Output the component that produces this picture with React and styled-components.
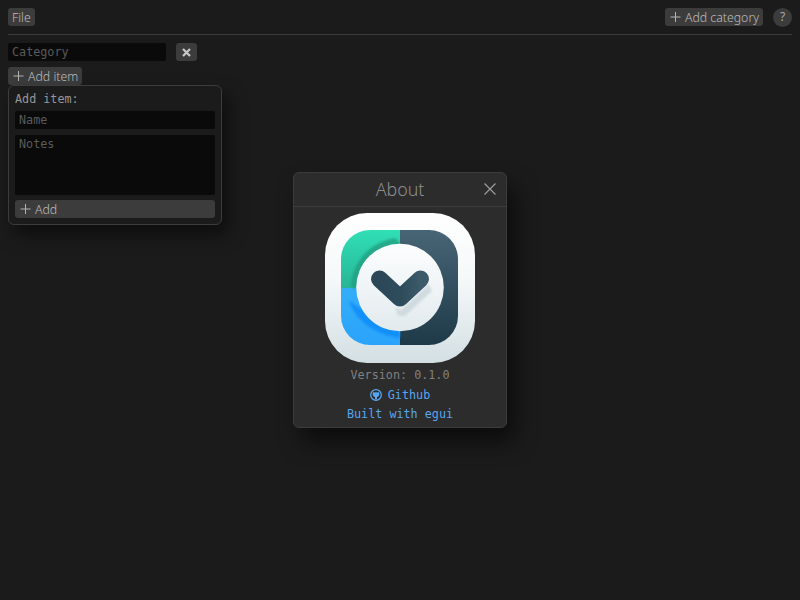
import styled, { createGlobalStyle } from 'styled-components';

const Global = createGlobalStyle`
    html, body { margin: 0; padding: 0; background: #1b1b1b; }
    #root { width: 800px; height: 600px; overflow: hidden; }
`;

const ui = '"Noto Sans", "DejaVu Sans", sans-serif';
const mono = '"DejaVu Sans Mono", "Liberation Mono", monospace';

const Page = styled.div`
    position: relative;
    width: 800px;
    height: 600px;
    box-sizing: border-box;
    padding: 8px 8px 0;
    background: #1b1b1b;
`;

const TopBar = styled.header`
    display: flex;
    align-items: flex-start;
    height: 18px;
    padding-bottom: 8px;
    border-bottom: 1px solid #3c3c3c;
`;

const Spacer = styled.div`
    flex: 1;
`;

const Button = styled.button`
    display: flex;
    align-items: center;
    gap: 4px;
    height: 18px;
    padding: 0 4px;
    border: 0;
    border-radius: 3px;
    background: #3c3c3c;
    color: #bcbcbc;
    font: 300 12.3px ${ui};
    white-space: nowrap;
`;

const WideButton = styled(Button)`
    width: 200px;
`;

const HelpButton = styled.div`
    width: 19px;
    height: 19px;
    margin-left: 10px;
    border-radius: 50%;
    background: #3c3c3c;
    color: #a8a8a8;
    font: 400 12px/18px ${ui};
    text-align: center;
`;

const CategoryRow = styled.div`
    display: flex;
    align-items: center;
    gap: 10px;
    margin-top: 8px;
`;

const Field = styled.div`
    box-sizing: border-box;
    width: ${p => p.$width}px;
    height: ${p => p.$height}px;
    padding: 2px 4px 0;
    border-radius: 2px;
    background: #0a0a0a;
    color: #5a5a5a;
    font: 11.75px/14px ${mono};
`;

const CloseButton = styled.div`
    display: flex;
    align-items: center;
    justify-content: center;
    width: 21px;
    height: 18px;
    border-radius: 3px;
    background: #3c3c3c;
`;

const AddItemRow = styled.div`
    display: flex;
    margin-top: 6px;
`;

const Popup = styled.section`
    position: absolute;
    left: 8px;
    top: 85px;
    box-sizing: border-box;
    width: 214px;
    height: 140px;
    padding: 6px 6px 6px;
    display: flex;
    flex-direction: column;
    border: 1px solid #3c3c3c;
    border-radius: 6px;
    background: #1b1b1b;
    box-shadow: 6px 10px 18px rgba(0, 0, 0, 0.5);
`;

const PopupTitle = styled.div`
    height: 19px;
    color: #969696;
    font: 11.75px/14px ${mono};
`;

const PopupFields = styled.div`
    display: flex;
    flex-direction: column;
    gap: 6px;
`;

const PopupAction = styled(WideButton)`
    margin-top: 5px;
`;

const Dialog = styled.section`
    position: absolute;
    left: 293px;
    top: 172px;
    box-sizing: border-box;
    width: 214px;
    height: 256px;
    display: flex;
    flex-direction: column;
    align-items: center;
    border: 1px solid #3c3c3c;
    border-radius: 6px;
    background: #2c2c2c;
    box-shadow: 8px 14px 22px rgba(0, 0, 0, 0.55);
`;

const DialogHeader = styled.header`
    position: relative;
    align-self: stretch;
    box-sizing: border-box;
    height: 34px;
    border-bottom: 1px solid #3c3c3c;
    color: #8c8c8c;
    font: 300 17.8px/33px ${ui};
    text-align: center;
`;

const DialogClose = styled.svg`
    position: absolute;
    right: 10px;
    top: 10px;
`;

const Logo = styled.svg`
    margin-top: 6px;
    display: block;
`;

const Version = styled.div`
    margin-top: 5px;
    color: #808080;
    font: 11.75px/14px ${mono};
`;

const Link = styled.div`
    display: flex;
    align-items: center;
    gap: 6px;
    margin-top: ${p => p.$top}px;
    color: #5aa5f0;
    font: 11.75px/14px ${mono};
`;

const Plus = () => (
    <svg width="12" height="12" viewBox="0 0 12 12" fill="none" stroke="#b4b4b4" strokeWidth="1">
        <path d="M6.500 1v10M1.500 6h10" />
    </svg>
);

const AppLogo = () => (
    <Logo width="150" height="150" viewBox="0 0 150 150">
        <defs>
            <linearGradient id="frame" x1="0" y1="0" x2="0" y2="1">
                <stop offset="0" stopColor="#ffffff" />
                <stop offset="0.45" stopColor="#f5f8f9" />
                <stop offset="1" stopColor="#d3dfe3" />
            </linearGradient>
            <linearGradient id="green" x1="0" y1="0" x2="0" y2="1">
                <stop offset="0" stopColor="#30dfb6" />
                <stop offset="1" stopColor="#28b596" />
            </linearGradient>
            <linearGradient id="blue" x1="0" y1="0" x2="0" y2="1">
                <stop offset="0" stopColor="#34adf8" />
                <stop offset="1" stopColor="#2aa4fb" />
            </linearGradient>
            <linearGradient id="dark" x1="0" y1="0" x2="0" y2="1">
                <stop offset="0" stopColor="#486576" />
                <stop offset="1" stopColor="#1e3a48" />
            </linearGradient>
            <linearGradient id="disc" x1="0" y1="0" x2="0" y2="1">
                <stop offset="0" stopColor="#fdfefe" />
                <stop offset="1" stopColor="#e2eaee" />
            </linearGradient>
            <linearGradient id="chev" x1="0" y1="0" x2="1" y2="0">
                <stop offset="0" stopColor="#2c4858" />
                <stop offset="0.55" stopColor="#2e4c5c" />
                <stop offset="1" stopColor="#3b5a6a" />
            </linearGradient>
            <filter id="soft" x="-20%" y="-20%" width="140%" height="140%">
                <feGaussianBlur stdDeviation="1.2" />
            </filter>
            <clipPath id="inner">
                <rect x="16" y="17" width="117" height="115" rx="29" />
            </clipPath>
        </defs>
        <rect width="150" height="150" rx="42" fill="url(#frame)" />
        <g clipPath="url(#inner)">
            <rect x="16" y="17" width="59" height="58" fill="url(#green)" />
            <rect x="16" y="75" width="59" height="57" fill="url(#blue)" />
            <rect x="75" y="17" width="58" height="115" fill="url(#dark)" />
            <path d="M26 75c0-22 14-44 44-50l5 5v45z" fill="#209c80" opacity="0.75" filter="url(#soft)" />
            <path d="M24 88c8 22 28 34 51 37v-20H50z" fill="#0f8cfb" opacity="0.85" filter="url(#soft)" />
        </g>
        <circle cx="75" cy="74.500" r="43.800" fill="url(#disc)" />
        <path d="M70 94l6 3 28-26 3 7-27 25h-7z" fill="#cbd8dd" opacity="0.85" filter="url(#soft)" />
        <path d="M54.500 66L75 85 95.500 66" fill="none" stroke="url(#chev)" strokeWidth="17" strokeLinecap="round" strokeLinejoin="round" />
    </Logo>
);

const GithubMark = () => (
    <svg width="12" height="12" viewBox="0 0 12 12">
        <circle cx="6" cy="6" r="5.300" fill="none" stroke="#5aa5f0" strokeWidth="1.300" />
        <path d="M2.700 5.200c0-1 .2-1.700.6-2.200l1.300.5a4.500 4.500 0 0 1 2.800 0l1.300-.5c.4.500.6 1.200.6 2.200 0 1.700-1.100 2.500-2.300 2.700v2.600H5V7.900C3.800 7.700 2.700 6.900 2.700 5.200z" fill="#5aa5f0" />
    </svg>
);

export default function App() {
    return (
        <Page>
            <Global />
            <TopBar>
                <Button>File</Button>
                <Spacer />
                <Button><Plus />Add category</Button>
                <HelpButton>?</HelpButton>
            </TopBar>
            <CategoryRow>
                <Field $width={158} $height={18}>Category</Field>
                <CloseButton>
                    <svg width="9" height="9" viewBox="0 0 9 9" stroke="#c8c8c8" strokeWidth="2.200">
                        <path d="M1 1l7 7M8 1l-7 7" />
                    </svg>
                </CloseButton>
            </CategoryRow>
            <AddItemRow>
                <Button><Plus />Add item</Button>
            </AddItemRow>
            <Popup>
                <PopupTitle>Add item:</PopupTitle>
                <PopupFields>
                    <Field $width={200} $height={18}>Name</Field>
                    <Field $width={200} $height={60}>Notes</Field>
                </PopupFields>
                <PopupAction><Plus />Add</PopupAction>
            </Popup>
            <Dialog>
                <DialogHeader>
                    About
                    <DialogClose width="12" height="12" viewBox="0 0 12 12" stroke="#a0a0a0" strokeWidth="1.100">
                        <path d="M.5.5l11 11M11.500.5l-11 11" />
                    </DialogClose>
                </DialogHeader>
                <AppLogo />
                <Version>Version: 0.1.0</Version>
                <Link $top={6}><GithubMark />Github</Link>
                <Link $top={5}>Built with egui</Link>
            </Dialog>
        </Page>
    );
}
